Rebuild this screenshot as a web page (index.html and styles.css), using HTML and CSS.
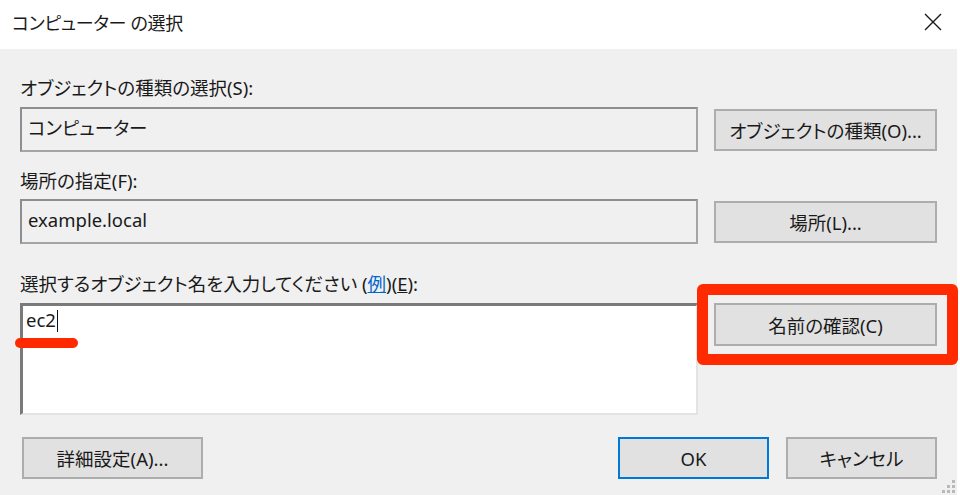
FILE: index.html
```html
<!DOCTYPE html>
<html lang="ja">
<head>
<meta charset="utf-8">
<title>コンピューター の選択</title>
<link rel="stylesheet" href="styles.css">
</head>
<body>
<div class="window">
  <div class="titlebar">
    <span class="title">コンピューター の選択</span>
    <span class="close">
      <svg width="18" height="18" viewBox="0 0 18 18"><path d="M1 1 L17 17 M17 1 L1 17" stroke="#1a1a1a" stroke-width="1.4" fill="none"/></svg>
    </span>
  </div>
  <div class="content">
    <div class="label l1">オブジェクトの種類の選択(S):</div>
    <div class="row">
      <div class="field">コンピューター</div>
      <button class="btn">オブジェクトの種類(O)...</button>
    </div>
    <div class="label l2">場所の指定(F):</div>
    <div class="row">
      <div class="field">example.local</div>
      <button class="btn">場所(L)...</button>
    </div>
    <div class="label l3">選択するオブジェクト名を入力してください (<span class="link">例</span>)(<u>E</u>):</div>
    <div class="row top">
      <div class="area"><span class="typed">ec2</span><span class="caret"></span><span class="mark"></span></div>
      <div class="btnwrap">
        <button class="btn">名前の確認(C)</button>
        <span class="highlight"></span>
      </div>
    </div>
    <div class="footer">
      <button class="btn small">詳細設定(A)...</button>
      <div class="right">
        <button class="btn small ok">OK</button>
        <button class="btn small">キャンセル</button>
      </div>
    </div>
    <div class="grip">
      <i style="grid-area:1/3"></i>
      <i style="grid-area:2/2"></i><i style="grid-area:2/3"></i>
      <i style="grid-area:3/1"></i><i style="grid-area:3/2"></i><i style="grid-area:3/3"></i>
    </div>
  </div>
</div>
</body>
</html>
```

FILE: styles.css
```css
* { box-sizing: border-box; }
html, body { margin: 0; padding: 0; background: #ffffff; }
body {
  width: 960px; height: 495px; overflow: hidden;
  font-family: "Noto Sans", "Noto Sans CJK JP", sans-serif;
  font-size: 18.5px; color: #1a1a1a;
  font-feature-settings: "palt";
}
.window { width: 960px; height: 495px; }
.titlebar {
  height: 49px; display: flex; align-items: center; justify-content: space-between;
  padding: 0 18px 6px 12px; background: #fff;
}
.title { font-size: 18px; letter-spacing: -0.3px; }
.close { display: flex; }
.content {
  position: relative;
  width: 957px; height: 446px; background: #f0f0f0;
  padding: 27px 0 0 20px;
}
.label { height: 24px; line-height: 24px; white-space: nowrap; }
.l1 { margin-bottom: 7px; }
.l2 { margin-top: 17px; margin-bottom: 6px; }
.l3 { margin-top: 28px; margin-bottom: 7px; }
.link { color: #0066cc; text-decoration: underline; }
.row { display: flex; align-items: center; gap: 16px; }
.row.top { align-items: flex-start; }
.field {
  width: 678px; height: 45px; padding: 7px 0 0 6px;
  border: 2px solid #a5a5a5; border-top-color: #8e8e8e; border-left-color: #8e8e8e;
  background: #f0f0f0; line-height: 24px;
}
.btn {
  width: 223px; height: 42px; padding: 0;
  background: #e1e1e1; border: 2px solid #adadad;
  font: inherit; color: #1a1a1a; font-feature-settings: "palt";
}
.area {
  position: relative;
  width: 678px; height: 112px; background: #fff;
  border-style: solid; border-width: 3px 2px 2px 3px;
  border-color: #7a7a7a #e3e3e3 #e3e3e3 #7a7a7a;
  padding: 2px 0 0 3px; line-height: 24px; display: flex; align-items: flex-start;
}
.caret { width: 1px; height: 22px; background: #111; margin: 2px 0 0 1px; }
.mark {
  position: absolute; left: -8px; top: 32px; width: 63px; height: 10px;
  border-radius: 5px; background: #ff2a00;
}
.btnwrap { position: relative; }
.btnwrap .btn { height: 43px; }
.highlight {
  position: absolute; left: -17px; top: -19px; width: 261px; height: 81px;
  border: 11px solid #ff2a00; border-radius: 6px;
}
.footer {
  margin-top: 22px; display: flex; justify-content: space-between;
  width: 917px; padding-left: 2px;
}
.right { display: flex; gap: 17px; }
.btn.small { width: 151px; }
.footer > .btn.small { width: 181px; }
.btn.ok { border-color: #0078d7; }
.grip {
  position: absolute; right: 2px; bottom: 2px;
  display: grid; grid-template-columns: repeat(3, 3px); grid-template-rows: repeat(3, 3px); gap: 2px;
}
.grip i { display: block; width: 3px; height: 3px; background: #b9b9b9; }
```
